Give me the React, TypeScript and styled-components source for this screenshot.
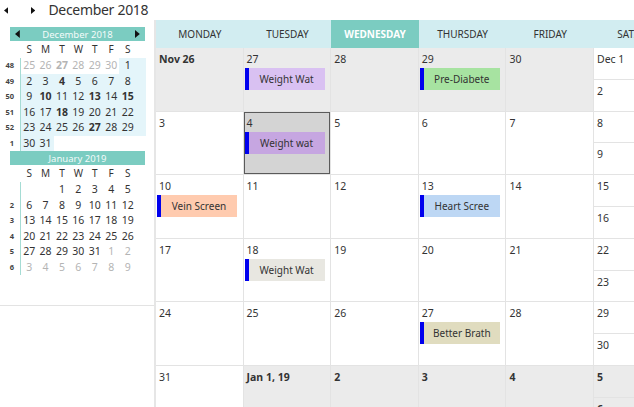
import React from 'react';
import styled, { createGlobalStyle } from 'styled-components';

const TEAL = '#7BCCC1';

const GlobalStyle = createGlobalStyle`
  html, body {
    margin: 0;
    padding: 0;
    background: #ffffff;
  }
  body {
    font-family: "Segoe UI", "Noto Sans", "Open Sans", sans-serif;
    color: #333333;
  }
`;

const Page = styled.div`
  width: 634px;
  height: 407px;
  overflow: hidden;
  display: flex;
  flex-direction: column;
`;

const Toolbar = styled.div`
  height: 20px;
  flex-shrink: 0;
  display: flex;
  align-items: center;
  padding-left: 4px;
`;

const NavArrow = styled.span<{ $gap: number }>`
  display: flex;
  align-items: center;
  margin-right: ${p => p.$gap}px;
`;

const Title = styled.div`
  font-size: 14px;
  letter-spacing: -0.3px;
  line-height: 20px;
  color: #333;
  white-space: nowrap;
`;

const Body = styled.div`
  flex: 1;
  display: flex;
  min-height: 0;
`;

const SidePanel = styled.div`
  width: 154px;
  flex-shrink: 0;
`;

const Calendars = styled.div`
  height: 286px;
  box-sizing: border-box;
  padding-top: 7px;
  border-bottom: 1px solid #e3e3e3;
`;

const MonthBand = styled.div`
  margin-left: 10px;
  width: 135px;
  height: 14px;
  box-sizing: border-box;
  padding: 0 5px;
  background: ${TEAL};
  color: #f4fbfa;
  font-size: 9.5px;
  display: flex;
  align-items: center;
  justify-content: space-between;
`;

const BandTitle = styled.span`
  flex: 1;
  text-align: center;
`;

const DowRow = styled.div`
  margin-left: 21px;
  height: 15px;
  display: grid;
  grid-template-columns: repeat(6, 16.4px) 26.6px;
  align-items: center;
  font-size: 10px;
  color: #333;

  & > span {
    text-align: center;
  }
  & > span:last-child {
    padding-right: 10px;
  }
`;

const MonthBody = styled.div`
  display: flex;
  margin-top: 2px;
`;

const WeekCol = styled.div`
  width: 20px;
  display: flex;
  flex-direction: column;
`;

const WeekNum = styled.div`
  height: 15.5px;
  line-height: 15.5px;
  font-size: 7.5px;
  font-weight: 700;
  color: #444;
  text-align: right;
  padding-right: 6px;
`;

const DateGrid = styled.div`
  border-left: 1px solid #a5dcd4;
  display: grid;
  grid-template-columns: repeat(6, 16.4px) 26.6px;
  grid-auto-rows: 15.5px;
`;

const MiniDay = styled.div<{ $hl: boolean; $muted: boolean; $bold: boolean }>`
  font-size: 10.5px;
  line-height: 15.5px;
  text-align: center;
  background: ${p => (p.$hl ? '#e4f5fa' : 'transparent')};
  color: ${p => (p.$muted ? '#b4b4b4' : '#333')};
  font-weight: ${p => (p.$bold ? 700 : 400)};

  &:nth-child(7n) {
    padding-right: 10px;
  }
`;

const Scheduler = styled.div`
  flex: 1;
  min-width: 0;
  border-left: 2px solid #e6e6e6;
  overflow: hidden;
`;

const HeaderRow = styled.div`
  display: grid;
  grid-template-columns: repeat(6, 87.6px);
  height: 28px;
  background: #d2edf1;
`;

const HeaderCell = styled.div<{ $active?: boolean }>`
  display: flex;
  align-items: center;
  justify-content: center;
  font-size: 10px;
  white-space: nowrap;
  background: ${p => (p.$active ? TEAL : 'transparent')};
  color: ${p => (p.$active ? '#ffffff' : '#333')};
  font-weight: ${p => (p.$active ? 700 : 400)};
`;

const MonthGrid = styled.div`
  display: grid;
  grid-template-columns: repeat(6, 87.6px);
  grid-auto-rows: 63.6px;
`;

const Cell = styled.div<{ $other?: boolean; $selected?: boolean }>`
  box-sizing: border-box;
  padding: 5px 3px 0;
  border-right: 1px solid #e3e3e3;
  border-bottom: 1px solid #e3e3e3;
  background: ${p => (p.$selected ? '#d4d4d4' : p.$other ? '#ebebeb' : '#ffffff')};
  box-shadow: ${p => (p.$selected ? 'inset 0 0 0 1px #5a5a5a' : 'none')};
  overflow: hidden;
`;

const WeekendCell = styled.div`
  display: flex;
  flex-direction: column;
  border-right: 1px solid #e3e3e3;
  border-bottom: 1px solid #e3e3e3;
  box-sizing: border-box;
`;

const Half = styled.div<{ $other?: boolean }>`
  flex: 1;
  box-sizing: border-box;
  padding: 5px 3px 0;
  background: ${p => (p.$other ? '#ebebeb' : '#ffffff')};

  & + & {
    border-top: 1px solid #e3e3e3;
  }
`;

const DateLabel = styled.div<{ $bold?: boolean }>`
  font-size: 10.5px;
  line-height: 13px;
  font-weight: ${p => (p.$bold ? 700 : 400)};
  color: #333;
  white-space: nowrap;
`;

const Appt = styled.div<{ $color: string }>`
  margin: 2px 0 0 -2px;
  width: 80px;
  height: 22px;
  display: flex;
  background: ${p => p.$color};
`;

const Stripe = styled.span`
  width: 4px;
  flex-shrink: 0;
  background: #0000ee;
`;

const ApptText = styled.span`
  flex: 1;
  display: flex;
  align-items: center;
  justify-content: center;
  font-size: 10px;
  color: #333;
  white-space: nowrap;
  overflow: hidden;
`;

const Tri = ({ dir, h = 7 }: { dir: 'l' | 'r'; h?: number }) => (
  <svg width={h * 0.6} height={h} viewBox="0 0 6 10">
    {dir === 'l' ? <polygon points="6,0 6,10 0,5" fill="#111" /> : <polygon points="0,0 0,10 6,5" fill="#111" />}
  </svg>
);

type MiniCell = { d?: number; m?: boolean; b?: boolean };
type MiniWeek = { wk: string; days: MiniCell[] };

const mk = (list: (number | string | null)[]): MiniCell[] =>
  list.map(v => {
    if (v === null) return {};
    if (typeof v === 'number') return { d: v };
    const b = v.endsWith('*');
    const m = v.startsWith('~');
    return { d: parseInt(v.replace(/[~*]/g, ''), 10), m, b };
  });

const december: MiniWeek[] = [
  { wk: '48', days: mk(['~25', '~26', '~27*', '~28', '~29', '~30', 1]) },
  { wk: '49', days: mk([2, 3, '4*', 5, 6, 7, 8]) },
  { wk: '50', days: mk([9, '10*', 11, 12, '13*', 14, '15*']) },
  { wk: '51', days: mk([16, 17, '18*', 19, 20, 21, 22]) },
  { wk: '52', days: mk([23, 24, 25, 26, '27*', 28, 29]) },
  { wk: '1', days: mk([30, 31, null, null, null, null, null]) },
];

const january: MiniWeek[] = [
  { wk: '', days: mk([null, null, 1, 2, 3, 4, 5]) },
  { wk: '2', days: mk([6, 7, 8, 9, 10, 11, 12]) },
  { wk: '3', days: mk([13, 14, 15, 16, 17, 18, 19]) },
  { wk: '4', days: mk([20, 21, 22, 23, 24, 25, 26]) },
  { wk: '5', days: mk([27, 28, 29, 30, 31, '~1', '~2']) },
  { wk: '6', days: mk(['~3', '~4', '~5', '~6', '~7', '~8', '~9']) },
];

const MiniMonth = ({ title, weeks, highlight, arrows }: { title: string; weeks: MiniWeek[]; highlight: boolean; arrows?: boolean }) => (
  <div>
    <MonthBand>
      {arrows ? <Tri dir="l" h={8} /> : null}
      <BandTitle>{title}</BandTitle>
      {arrows ? <Tri dir="r" h={8} /> : null}
    </MonthBand>
    <DowRow>
      {['S', 'M', 'T', 'W', 'T', 'F', 'S'].map((d, i) => (
        <span key={i}>{d}</span>
      ))}
    </DowRow>
    <MonthBody>
      <WeekCol>
        {weeks.map((w, i) => (
          <WeekNum key={i}>{w.wk}</WeekNum>
        ))}
      </WeekCol>
      <DateGrid>
        {weeks.flatMap((w, i) =>
          w.days.map((c, j) => (
            <MiniDay key={`${i}-${j}`} $hl={highlight && c.d !== undefined && !c.m} $muted={!!c.m} $bold={!!c.b}>
              {c.d ?? ''}
            </MiniDay>
          ))
        )}
      </DateGrid>
    </MonthBody>
  </div>
);

type Day = { label: string; other?: boolean; bold?: boolean; selected?: boolean; appt?: { text: string; color: string } };
type Row = { days: Day[]; weekend: [Day, Day] };

const rows: Row[] = [
  {
    days: [
      { label: 'Nov 26', other: true, bold: true },
      { label: '27', other: true, appt: { text: 'Weight Wat', color: '#d9c1f2' } },
      { label: '28', other: true },
      { label: '29', other: true, appt: { text: 'Pre-Diabete', color: '#a7e3a1' } },
      { label: '30', other: true },
    ],
    weekend: [{ label: 'Dec 1' }, { label: '2' }],
  },
  {
    days: [
      { label: '3' },
      { label: '4', selected: true, appt: { text: 'Weight wat', color: '#c6a6e1' } },
      { label: '5' },
      { label: '6' },
      { label: '7' },
    ],
    weekend: [{ label: '8' }, { label: '9' }],
  },
  {
    days: [
      { label: '10', appt: { text: 'Vein Screen', color: '#ffcbaf' } },
      { label: '11' },
      { label: '12' },
      { label: '13', appt: { text: 'Heart Scree', color: '#bdd7f4' } },
      { label: '14' },
    ],
    weekend: [{ label: '15' }, { label: '16' }],
  },
  {
    days: [
      { label: '17' },
      { label: '18', appt: { text: 'Weight Wat', color: '#e8e7e1' } },
      { label: '19' },
      { label: '20' },
      { label: '21' },
    ],
    weekend: [{ label: '22' }, { label: '23' }],
  },
  {
    days: [
      { label: '24' },
      { label: '25' },
      { label: '26' },
      { label: '27', appt: { text: 'Better Brath', color: '#e0dcbf' } },
      { label: '28' },
    ],
    weekend: [{ label: '29' }, { label: '30' }],
  },
  {
    days: [
      { label: '31' },
      { label: 'Jan 1, 19', other: true, bold: true },
      { label: '2', other: true, bold: true },
      { label: '3', other: true, bold: true },
      { label: '4', other: true, bold: true },
    ],
    weekend: [{ label: '5', other: true, bold: true }, { label: '6', other: true, bold: true }],
  },
];

const headers = ['MONDAY', 'TUESDAY', 'WEDNESDAY', 'THURSDAY', 'FRIDAY', 'SAT/SUN'];

export default function App() {
  return (
    <Page>
      <GlobalStyle />
      <Toolbar>
        <NavArrow $gap={23}>
          <Tri dir="l" />
        </NavArrow>
        <NavArrow $gap={13}>
          <Tri dir="r" />
        </NavArrow>
        <Title>December 2018</Title>
      </Toolbar>
      <Body>
        <SidePanel>
          <Calendars>
            <MiniMonth title="December 2018" weeks={december} highlight arrows />
            <MiniMonth title="January 2019" weeks={january} highlight={false} />
          </Calendars>
        </SidePanel>
        <Scheduler>
          <HeaderRow>
            {headers.map(h => (
              <HeaderCell key={h} $active={h === 'WEDNESDAY'}>
                {h}
              </HeaderCell>
            ))}
          </HeaderRow>
          <MonthGrid>
            {rows.map((r, i) => (
              <React.Fragment key={i}>
                {r.days.map((d, j) => (
                  <Cell key={j} $other={d.other} $selected={d.selected}>
                    <DateLabel $bold={d.bold}>{d.label}</DateLabel>
                    {d.appt ? (
                      <Appt $color={d.appt.color}>
                        <Stripe />
                        <ApptText>{d.appt.text}</ApptText>
                      </Appt>
                    ) : null}
                  </Cell>
                ))}
                <WeekendCell>
                  {r.weekend.map((d, j) => (
                    <Half key={j} $other={d.other}>
                      <DateLabel $bold={d.bold}>{d.label}</DateLabel>
                    </Half>
                  ))}
                </WeekendCell>
              </React.Fragment>
            ))}
          </MonthGrid>
        </Scheduler>
      </Body>
    </Page>
  );
}
